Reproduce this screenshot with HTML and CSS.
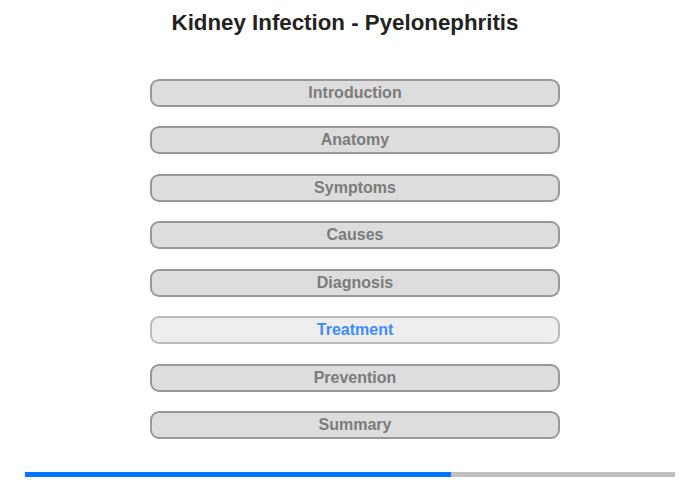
FILE: index.html
```html
<!DOCTYPE html>
<html>
<head>
<meta charset="utf-8">
<link rel="stylesheet" href="styles.css">
</head>
<body>
<div class="page">
  <h1 class="title">Kidney Infection - Pyelonephritis</h1>
  <nav class="menu">
    <div class="item">Introduction</div>
    <div class="item">Anatomy</div>
    <div class="item">Symptoms</div>
    <div class="item">Causes</div>
    <div class="item">Diagnosis</div>
    <div class="item active">Treatment</div>
    <div class="item">Prevention</div>
    <div class="item">Summary</div>
  </nav>
  <div class="progress"><div class="fill" style="width:65.5%"></div></div>
</div>
</body>
</html>
```
FILE: styles.css
```css
html, body { margin: 0; padding: 0; background: #fff; }
body { font-family: "Liberation Sans", Arial, sans-serif; }
.page { width: 700px; height: 480px; display: flex; flex-direction: column; align-items: center; }
.title { margin: 11px 10px 0 0; font-size: 22.3px; line-height: 24px; font-weight: bold; color: #222; }
.menu { margin: 44px 0 0 10px; display: flex; flex-direction: column; gap: 19.43px; }
.item { width: 406px; height: 24px; box-sizing: content-box; border: 2px solid #999; border-radius: 9px; background: #ddd; color: #7b7b7b; font-weight: bold; font-size: 16px; line-height: 24px; text-align: center; }
.item.active { background: #eee; border-color: #bbb; color: #3d8cff; }
.progress { margin-top: 33px; width: 650px; height: 5px; background: #c0c0c0; }
.fill { height: 100%; background: #0077ff; }
```
